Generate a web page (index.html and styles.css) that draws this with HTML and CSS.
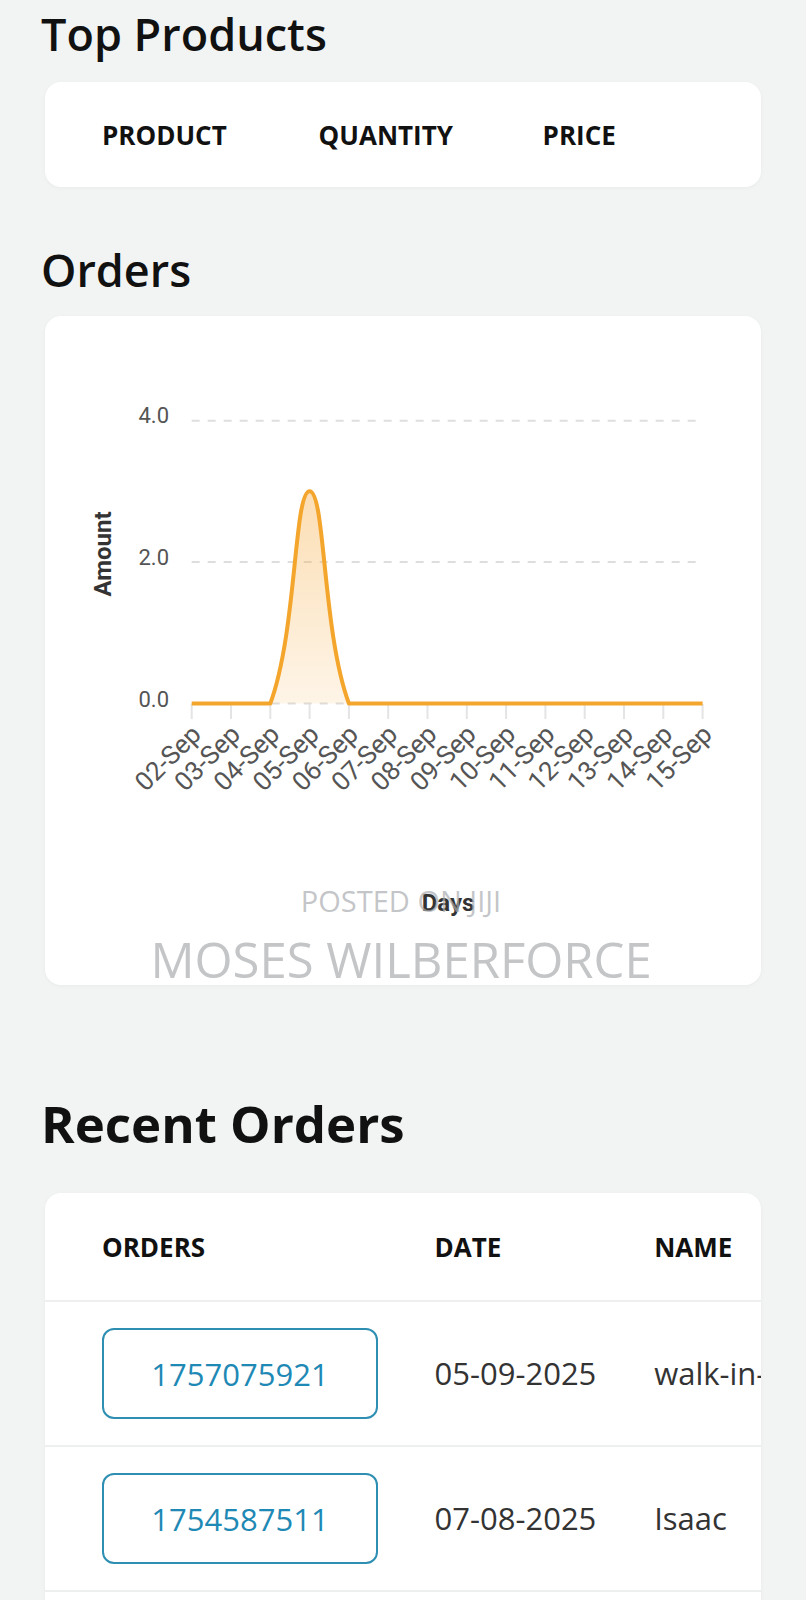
FILE: index.html
```html
<!DOCTYPE html>
<html lang="en">
<head>
<meta charset="utf-8">
<title>Dashboard</title>
<link rel="stylesheet" href="styles.css">
</head>
<body>
<main class="page">
  <section class="block block-top">
    <h2 class="title">Top Products</h2>
    <div class="card products-card">
      <div class="products-head">
        <span>PRODUCT</span><span>QUANTITY</span><span>PRICE</span>
      </div>
    </div>
  </section>

  <section class="block block-orders">
    <h2 class="title">Orders</h2>
    <div class="card chart-card">
      <svg class="chart" width="716" height="669" viewBox="0 0 716 669" xmlns="http://www.w3.org/2000/svg">
        <defs>
          <linearGradient id="fillGrad" gradientUnits="userSpaceOnUse" x1="0" y1="491" x2="0" y2="704">
            <stop offset="0" stop-color="#f6a83a" stop-opacity="0.38"/>
            <stop offset="1" stop-color="#f6a83a" stop-opacity="0.12"/>
          </linearGradient>
        </defs>
        <g transform="translate(-45,-316)">
          <g class="grid">
            <line x1="191.7" y1="420.7" x2="702.6" y2="420.7"/>
            <line x1="191.7" y1="562.1" x2="702.6" y2="562.1"/>
            <line x1="191.7" y1="703.5" x2="702.6" y2="703.5"/>
          </g>
          <g class="ticks">
            <line x1="191.7" y1="704" x2="191.7" y2="719"/>
            <line x1="231.0" y1="704" x2="231.0" y2="719"/>
            <line x1="270.3" y1="704" x2="270.3" y2="719"/>
            <line x1="309.6" y1="704" x2="309.6" y2="719"/>
            <line x1="348.9" y1="704" x2="348.9" y2="719"/>
            <line x1="388.2" y1="704" x2="388.2" y2="719"/>
            <line x1="427.5" y1="704" x2="427.5" y2="719"/>
            <line x1="466.8" y1="704" x2="466.8" y2="719"/>
            <line x1="506.1" y1="704" x2="506.1" y2="719"/>
            <line x1="545.4" y1="704" x2="545.4" y2="719"/>
            <line x1="584.7" y1="704" x2="584.7" y2="719"/>
            <line x1="624.0" y1="704" x2="624.0" y2="719"/>
            <line x1="663.3" y1="704" x2="663.3" y2="719"/>
            <line x1="702.6" y1="704" x2="702.6" y2="719"/>
          </g>
          <g class="ylabels">
            <text x="169" y="422.7">4.0</text>
            <text x="169" y="565">2.0</text>
            <text x="169" y="706.5">0.0</text>
          </g>
          <path class="area" d="M270.3,703.5 C296.9,631.7 293.9,491.2 309.6,491.2 C325.3,491.2 322.3,631.7 348.9,703.5 Z"/>
          <path class="line" d="M191.7,703.5 L270.3,703.5 C296.9,631.7 293.9,491.2 309.6,491.2 C325.3,491.2 322.3,631.7 348.9,703.5 L702.6,703.5"/>
          <g class="xlabels">
            <text x="197.7" y="731" transform="rotate(-45 197.7 731)">02-Sep</text>
            <text x="237.0" y="731" transform="rotate(-45 237.0 731)">03-Sep</text>
            <text x="276.3" y="731" transform="rotate(-45 276.3 731)">04-Sep</text>
            <text x="315.6" y="731" transform="rotate(-45 315.6 731)">05-Sep</text>
            <text x="354.9" y="731" transform="rotate(-45 354.9 731)">06-Sep</text>
            <text x="394.2" y="731" transform="rotate(-45 394.2 731)">07-Sep</text>
            <text x="433.5" y="731" transform="rotate(-45 433.5 731)">08-Sep</text>
            <text x="472.8" y="731" transform="rotate(-45 472.8 731)">09-Sep</text>
            <text x="512.1" y="731" transform="rotate(-45 512.1 731)">10-Sep</text>
            <text x="551.4" y="731" transform="rotate(-45 551.4 731)">11-Sep</text>
            <text x="590.7" y="731" transform="rotate(-45 590.7 731)">12-Sep</text>
            <text x="630.0" y="731" transform="rotate(-45 630.0 731)">13-Sep</text>
            <text x="669.3" y="731" transform="rotate(-45 669.3 731)">14-Sep</text>
            <text x="708.6" y="731" transform="rotate(-45 708.6 731)">15-Sep</text>
          </g>
          <text class="axis-title" x="110.7" y="554" transform="rotate(-90 110.7 554)">Amount</text>
          <text class="axis-title" x="448" y="910.7">Days</text>
        </g>
      </svg>
      <div class="watermark">
        <span class="wm-small">POSTED ON JIJI</span>
        <span class="wm-big">MOSES WILBERFORCE</span>
      </div>
    </div>
  </section>

  <section class="block block-recent">
    <h2 class="title title-big">Recent Orders</h2>
    <div class="card orders-card">
      <div class="orders-row orders-head">
        <span>ORDERS</span><span>DATE</span><span>NAME</span>
      </div>
      <div class="orders-row">
        <span class="order-cell"><a class="order-id">1757075921</a></span>
        <span class="cell">05-09-2025</span>
        <span class="cell">walk-in-customer</span>
      </div>
      <div class="orders-row">
        <span class="order-cell"><a class="order-id">1754587511</a></span>
        <span class="cell">07-08-2025</span>
        <span class="cell">Isaac</span>
      </div>
      <div class="orders-row orders-more"></div>
    </div>
  </section>
</main>
</body>
</html>
```

FILE: styles.css
```css
html, body {
  margin: 0;
  padding: 0;
}

body {
  background: #f2f4f4;
  font-family: "Open Sans", "Liberation Sans", sans-serif;
  color: #111;
}

.page {
  padding: 7px 45px 0 45px;
}

.title {
  margin: 0 0 0 -4px;
  font-size: 45px;
  line-height: 54px;
  font-weight: 600;
  color: #111;
}

.title-big {
  font-size: 51px;
  line-height: 61px;
  font-weight: 700;
}

.card {
  background: #ffffff;
  border-radius: 16px;
  box-shadow: 0 1px 4px rgba(0, 0, 0, 0.04);
}

/* Top products */
.block-top .card {
  margin-top: 21px;
}

.products-head {
  height: 105px;
  display: grid;
  grid-template-columns: 216.6px 224px auto;
  align-items: center;
  padding-left: 57px;
  font-size: 26px;
  line-height: 1;
  font-weight: 700;
  color: #111;
}

/* Orders chart */
.block-orders {
  margin-top: 56px;
}

.block-orders .card {
  margin-top: 19px;
}

.chart-card {
  position: relative;
  height: 669px;
  overflow: hidden;
}

.chart {
  display: block;
}

.grid line {
  stroke: #dedede;
  stroke-width: 2;
  stroke-dasharray: 8 8;
}

.ticks line {
  stroke: #e4e4e4;
  stroke-width: 2;
}

.ylabels text {
  font-family: Roboto, "Liberation Sans", sans-serif;
  font-size: 22px;
  fill: #555;
  text-anchor: end;
}

.xlabels text {
  font-family: Roboto, "Liberation Sans", sans-serif;
  font-size: 26px;
  fill: #555;
  text-anchor: end;
  dominant-baseline: middle;
}

.area {
  fill: url(#fillGrad);
}

.line {
  fill: none;
  stroke: #f4a52c;
  stroke-width: 4;
  stroke-linejoin: round;
}

.axis-title {
  font-family: Roboto, "Liberation Sans", sans-serif;
  font-size: 24px;
  font-weight: 700;
  fill: #333;
  text-anchor: middle;
}

.watermark {
  position: absolute;
  left: 0;
  right: 0;
  top: 570px;
  display: flex;
  flex-direction: column;
  align-items: center;
  pointer-events: none;
  font-family: "Open Sans", "Liberation Sans", sans-serif;
  font-weight: 400;
  color: rgba(170, 172, 175, 0.7);
  margin-left: -4px;
}

.wm-small {
  font-size: 29px;
  line-height: 29px;
}

.wm-big {
  font-size: 49px;
  line-height: 49px;
  margin-top: 19.5px;
}

/* Recent orders */
.block-recent {
  margin-top: 108px;
}

.block-recent .card {
  margin-top: 39px;
}

.orders-card {
  overflow: hidden;
  border-radius: 16px 16px 0 0;
}

.orders-row {
  display: grid;
  grid-template-columns: 332.6px 219.6px auto;
  align-items: center;
  padding-left: 57px;
  height: 143px;
  border-top: 2px solid #eef0f0;
  white-space: nowrap;
}

.orders-head {
  height: 107px;
  border-top: none;
  font-size: 26px;
  line-height: 1;
  font-weight: 700;
  color: #111;
}

.cell {
  font-size: 31px;
  line-height: 1.2;
  color: #333;
}

.order-id {
  box-sizing: border-box;
  width: 276px;
  height: 91px;
  display: flex;
  align-items: center;
  justify-content: center;
  border: 2px solid #2f8fb3;
  border-radius: 12px;
  font-size: 31px;
  color: #1f89b5;
  text-decoration: none;
}

.orders-more {
  height: 60px;
}
```
